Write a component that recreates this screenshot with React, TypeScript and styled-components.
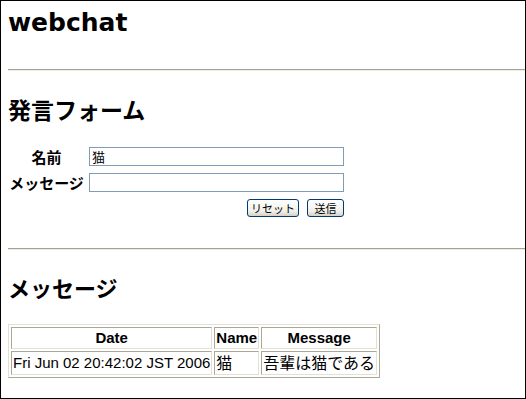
import styled, { createGlobalStyle } from 'styled-components';

const GlobalStyle = createGlobalStyle`
  html, body {
    margin: 0;
    padding: 0;
    background: #ffffff;
  }
  body {
    font-family: "Liberation Sans", "Noto Sans CJK JP", sans-serif;
    color: #000000;
  }
`;

const Page = styled.div`
  width: 526px;
  height: 399px;
  box-sizing: border-box;
  border: 1px solid #000000;
  padding-left: 7px;
  display: flex;
  flex-direction: column;
  overflow: hidden;
`;

const Title = styled.h1`
  margin: 7px 0 0;
  font-family: "DejaVu Sans", "Noto Sans CJK JP", sans-serif;
  font-size: 25px;
  line-height: 30px;
  font-weight: bold;
`;

const Rule = styled.hr<{ $gap: number }>`
  margin: ${(p) => p.$gap}px 0 0;
  height: 0;
  border: 0;
  border-top: 1px solid #a3a196;
  border-bottom: 1px solid #efede2;
`;

const Heading = styled.h2<{ $gap: number; $size: number }>`
  margin: ${(p) => p.$gap}px 0 0;
  font-family: "Noto Sans CJK JP", sans-serif;
  font-size: ${(p) => p.$size}px;
  line-height: 26px;
  font-weight: bold;
`;

const Form = styled.form`
  margin-top: 25px;
  display: grid;
  grid-template-columns: 77px 255px;
  column-gap: 4px;
  row-gap: 7px;
  align-items: center;
`;

const Label = styled.label`
  text-align: center;
  font-family: "Noto Sans CJK JP", sans-serif;
  font-size: 15px;
  font-weight: bold;
  line-height: 19px;
`;

const TextInput = styled.input`
  box-sizing: border-box;
  width: 255px;
  height: 19px;
  margin: 0;
  padding: 1px 2px;
  border: 1px solid #7f9db9;
  font-family: "Noto Sans CJK JP", sans-serif;
  font-size: 13px;
  line-height: 15px;
  outline: none;
`;

const Actions = styled.div`
  grid-column: 2;
  display: flex;
  justify-content: flex-end;
  gap: 8px;
`;

const Button = styled.button`
  box-sizing: border-box;
  height: 18px;
  min-width: 37px;
  margin: 0;
  padding: 0 3px;
  border: 1px solid #003c74;
  border-radius: 3px;
  background: linear-gradient(#ffffff, #f0f0ea 70%, #d6d0c5);
  font-family: "Noto Sans CJK JP", sans-serif;
  font-size: 11px;
  line-height: 16px;
  color: #000000;
`;

const Table = styled.table`
  margin-top: 24px;
  align-self: flex-start;
  border-collapse: separate;
  border-spacing: 2px;
  border: 1px solid;
  border-color: #e2dfd3 #aca899 #aca899 #e2dfd3;
`;

const HeadCell = styled.th`
  padding: 1px;
  border: 1px solid;
  border-color: #aca899 #e2dfd3 #e2dfd3 #aca899;
  font-family: "Liberation Sans", sans-serif;
  font-size: 15px;
  line-height: 18px;
  font-weight: bold;
  text-align: center;
`;

const Cell = styled.td`
  padding: 1px;
  border: 1px solid;
  border-color: #aca899 #e2dfd3 #e2dfd3 #aca899;
  font-family: "Liberation Sans", "Noto Sans CJK JP", sans-serif;
  font-size: 15px;
  line-height: 18px;
  white-space: nowrap;
`;

const Ja = styled.span`
  font-family: "Noto Sans CJK JP", sans-serif;
  font-size: 16px;
`;

interface Message {
  date: string;
  name: string;
  text: string;
}

const messages: Message[] = [
  { date: 'Fri Jun 02 20:42:02 JST 2006', name: '猫', text: '吾輩は猫である' },
];

export default function App() {
  return (
    <>
      <GlobalStyle />
      <Page>
        <Title>webchat</Title>
        <Rule $gap={31} />

        <Heading $gap={25} $size={23}>発言フォーム</Heading>
        <Form onSubmit={(e) => e.preventDefault()}>
          <Label htmlFor="name">名前</Label>
          <TextInput id="name" defaultValue="猫" />
          <Label htmlFor="message">メッセージ</Label>
          <TextInput id="message" />
          <Actions>
            <Button type="reset">リセット</Button>
            <Button type="submit">送信</Button>
          </Actions>
        </Form>
        <Rule $gap={31} />

        <Heading $gap={24} $size={22}>メッセージ</Heading>
        <Table>
          <thead>
            <tr>
              <HeadCell>Date</HeadCell>
              <HeadCell>Name</HeadCell>
              <HeadCell>Message</HeadCell>
            </tr>
          </thead>
          <tbody>
            {messages.map((m) => (
              <tr key={m.date}>
                <Cell>{m.date}</Cell>
                <Cell><Ja>{m.name}</Ja></Cell>
                <Cell><Ja>{m.text}</Ja></Cell>
              </tr>
            ))}
          </tbody>
        </Table>
      </Page>
    </>
  );
}
